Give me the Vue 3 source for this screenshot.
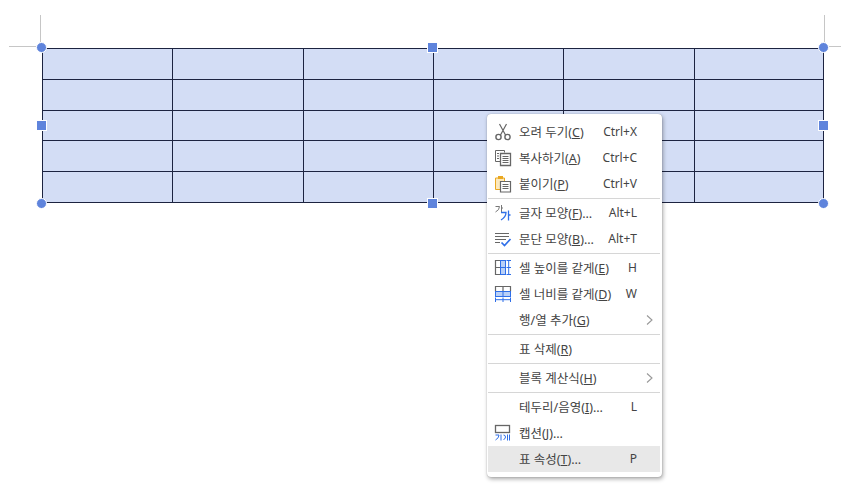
<script setup>
const groups = [
  [
    { label: '오려 두기(', key: 'C', tail: ')', sc: 'Ctrl+X', icon: 'cut' },
    { label: '복사하기(', key: 'A', tail: ')', sc: 'Ctrl+C', icon: 'copy' },
    { label: '붙이기(', key: 'P', tail: ')', sc: 'Ctrl+V', icon: 'paste' },
  ],
  [
    { label: '글자 모양(', key: 'F', tail: ')…', sc: 'Alt+L', icon: 'char' },
    { label: '문단 모양(', key: 'B', tail: ')…', sc: 'Alt+T', icon: 'para' },
  ],
  [
    { label: '셀 높이를 같게(', key: 'E', tail: ')', sc: 'H', icon: 'height' },
    { label: '셀 너비를 같게(', key: 'D', tail: ')', sc: 'W', icon: 'width' },
    { label: '행/열 추가(', key: 'G', tail: ')', arrow: true },
  ],
  [{ label: '표 삭제(', key: 'R', tail: ')' }],
  [{ label: '블록 계산식(', key: 'H', tail: ')', arrow: true }],
  [
    { label: '테두리/음영(', key: 'I', tail: ')…', sc: 'L' },
    { label: '캡션(', key: 'J', tail: ')…', icon: 'caption' },
    { label: '표 속성(', key: 'T', tail: ')…', sc: 'P', active: true },
  ],
]
const cells = Array.from({ length: 30 }, (_, i) => i)
const handles = ['c tl', 's tm', 'c tr', 's ml', 's mr', 'c bl', 's bm', 'c br']
</script>

<template>
  <div class="page">
    <i class="mark v left"></i>
    <i class="mark h left"></i>
    <i class="mark v right"></i>
    <i class="mark h right"></i>

    <div class="table">
      <div v-for="c in cells" :key="c" class="cell"></div>
    </div>

    <i v-for="h in handles" :key="h" class="handle" :class="h"></i>

    <div class="menu">
      <template v-for="(g, gi) in groups" :key="gi">
        <div v-if="gi" class="sep"></div>
        <div v-for="it in g" :key="it.label" class="row" :class="{ active: it.active }">
          <span class="ico">
            <svg v-if="it.icon === 'cut'" width="18" height="18" viewBox="0 0 18 18" fill="none" stroke="#666" stroke-width="1.2">
              <path d="M5.5 1 L11.5 12 M12.5 1 L6.5 12" />
              <circle cx="4.5" cy="14" r="2.6" stroke-width="1.4" />
              <circle cx="13.5" cy="14" r="2.6" stroke-width="1.4" />
            </svg>
            <svg v-else-if="it.icon === 'copy'" width="18" height="18" viewBox="0 0 18 18" fill="none" stroke="#666">
              <path d="M6.5 12.5 H1.5 V1.5 H10.5 V3.5" />
              <path d="M3 4.5 H5 M3 7 H5 M3 9.5 H5" />
              <path d="M6.5 4.5 H16.5 V16.5 H6.5 Z" stroke-width="1.3" />
              <path d="M8.5 7.5 H14.5 M8.5 9.5 H14.5 M8.5 11.5 H14.5 M8.5 13.5 H14.5" />
            </svg>
            <svg v-else-if="it.icon === 'paste'" width="18" height="18" viewBox="0 0 18 18" fill="none">
              <path d="M1.5 3 H10.5 V14.5 H1.5 Z" fill="#fce9bd" stroke="#eaa821" />
              <rect x="4" y="1" width="5" height="3" fill="#eaa821" />
              <path d="M6.5 6.5 H16.5 V17 H6.5 Z" fill="#fff" stroke="#666" stroke-width="1.2" />
              <path d="M8.5 9.5 H14.5 M8.5 11.5 H14.5 M8.5 13.5 H14.5" stroke="#666" />
            </svg>
            <svg v-else-if="it.icon === 'char'" width="18" height="18" viewBox="0 0 18 18" fill="none">
              <path d="M1.5 2.5 H5.5 Q5.5 6 1.5 8 M7.5 1 V8 M7.5 4 H9" stroke="#777" />
              <path d="M7 8.5 H12 Q12 13 7 16 M14.5 6.5 V16.5 M14.5 11 H16.5" stroke="#2f6fe8" stroke-width="1.3" />
            </svg>
            <svg v-else-if="it.icon === 'para'" width="18" height="18" viewBox="0 0 18 18" fill="none">
              <path d="M1 3.5 H15 M1 6.5 H15 M1 9.5 H12 M1 12.5 H6" stroke="#666" />
              <path d="M7.5 12.5 L10.5 15.5 L16.5 9" stroke="#2f6fe8" stroke-width="1.7" />
            </svg>
            <svg v-else-if="it.icon === 'height'" width="18" height="18" viewBox="0 0 18 18" fill="none">
              <path d="M6.5 1.5 H1.5 V15.5 H6.5 M1.5 8.5 H6.5" stroke="#666" stroke-width="1.2" />
              <rect x="6.5" y="1.5" width="5" height="14" fill="#b9d0f7" stroke="#2f6fe8" />
              <path d="M6.5 8.5 H11.5" stroke="#2f6fe8" />
              <path d="M12.5 1.5 H17 M12.5 15.5 H17 M14.7 1.5 V15.5 M12.5 8.5 H17" stroke="#2f6fe8" />
            </svg>
            <svg v-else-if="it.icon === 'width'" width="18" height="18" viewBox="0 0 18 18" fill="none">
              <path d="M1.5 6.5 V1.5 H16.5 V6.5 M9 1.5 V6.5" stroke="#666" stroke-width="1.2" />
              <rect x="1.5" y="6.5" width="15" height="5" fill="#b9d0f7" stroke="#2f6fe8" />
              <path d="M9 6.5 V11.5" stroke="#2f6fe8" />
              <path d="M1.5 12.5 V17 M16.5 12.5 V17 M1.5 14.7 H16.5 M9 12.5 V17" stroke="#2f6fe8" />
            </svg>
            <svg v-else-if="it.icon === 'caption'" width="18" height="18" viewBox="0 0 18 18" fill="none">
              <rect x="1.5" y="1.5" width="14" height="7" stroke="#666" stroke-width="1.3" />
              <path d="M1.5 11 H5 Q5 14 1.5 16 M7 10.5 V16.5 M9.5 11 Q11.5 11 11.5 13 T9.5 15.5 M13.5 10.5 V16.5 M15.5 10.5 V16.5" stroke="#2f6fe8" />
            </svg>
          </span>
          <span class="label">{{ it.label }}<u>{{ it.key }}</u>{{ it.tail }}</span>
          <span class="sc">{{ it.sc }}</span>
          <svg v-if="it.arrow" class="arrow" width="7" height="10" viewBox="0 0 7 10" fill="none" stroke="#999" stroke-width="1.1">
            <path d="M1 .5 L6 5 L1 9.5" />
          </svg>
        </div>
      </template>
    </div>
  </div>
</template>

<style scoped>
.page {
  position: relative;
  width: 841px;
  height: 486px;
  padding: 48px 0 0 42px;
  box-sizing: border-box;
  overflow: hidden;
  background: #fff;
  font-family: "Noto Sans", "Noto Sans CJK KR", sans-serif;
}
.table {
  display: grid;
  grid-template-columns: 129px 130px 129px 129px 130px 128px;
  grid-template-rows: 30px 30px 29px 30px 30px;
  gap: 1px;
  padding: 1px;
  width: 782px;
  height: 155px;
  box-sizing: border-box;
  background: #1c2340;
}
.cell { background: #d3ddf5; }

.mark { position: absolute; background: #c6c6c6; }
.mark.v { width: 1px; height: 27px; top: 15px; }
.mark.h { height: 1px; top: 46px; }
.mark.v.left { left: 40px; }
.mark.h.left { left: 9px; width: 27px; }
.mark.v.right { left: 824px; }
.mark.h.right { left: 829px; width: 12px; }

.handle { position: absolute; background: #5f84dc; box-sizing: border-box; width: 11px; height: 11px; border: 1px solid #fff; }
.handle.c { border-radius: 50%; }
.tl { left: 36px; top: 42px; }
.tr { left: 818px; top: 42px; }
.bl { left: 36px; top: 198px; }
.br { left: 818px; top: 198px; }
.tm { left: 427px; top: 42px; }
.bm { left: 427px; top: 198px; }
.ml { left: 36px; top: 120px; }
.mr { left: 818px; top: 120px; }

.menu {
  position: absolute;
  left: 487px;
  top: 114px;
  width: 175px;
  height: 363px;
  box-sizing: border-box;
  padding: 5px 2px 4px 1px;
  background: #fff;
  border-radius: 4px;
  box-shadow: 0 0 1px rgba(0, 0, 0, .35), 1px 2px 4px rgba(0, 0, 0, .35);
}
.sep { height: 1px; margin: 1px 0; background: #d6d6d6; }
.row {
  position: relative;
  display: flex;
  align-items: center;
  height: 26px;
  font-size: 12px;
  color: #444;
}
.row.active { background: #e8e8e8; }
.ico {
  width: 18px;
  height: 18px;
  margin: 0 7px 0 6px;
  flex: none;
}
.ico svg { display: block; }
.label { white-space: nowrap; font-size: 12.5px; margin-bottom: 2px; }
.sc { margin-left: auto; margin-right: 23px; margin-bottom: 2px; white-space: nowrap; }
.arrow { position: absolute; right: 7px; top: 8px; }
</style>
